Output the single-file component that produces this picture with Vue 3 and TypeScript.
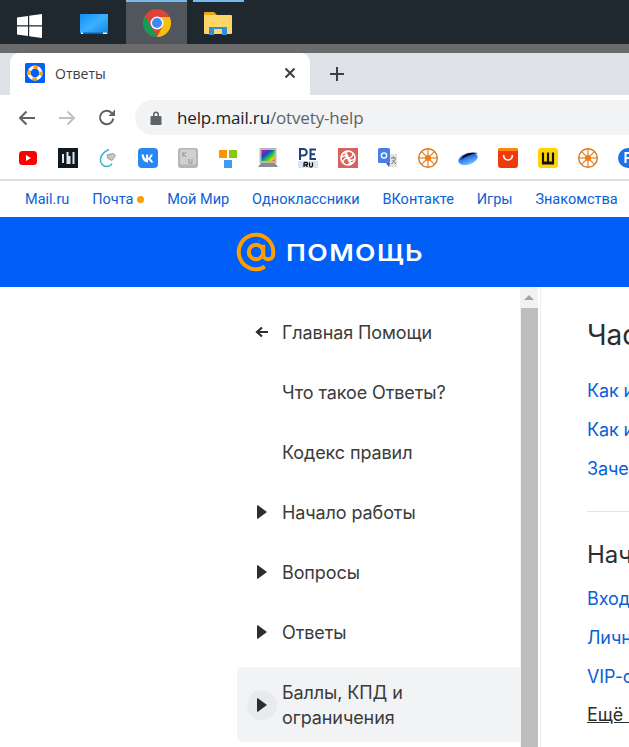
<script setup lang="ts">
const navLinks = ['Mail.ru', 'Почта', 'Мой Мир', 'Одноклассники', 'ВКонтакте', 'Игры', 'Знакомства']
const menu = [
  { label: 'Главная Помощи', icon: 'back' },
  { label: 'Что такое Ответы?', icon: '' },
  { label: 'Кодекс правил', icon: '' },
  { label: 'Начало работы', icon: 'play' },
  { label: 'Вопросы', icon: 'play' },
  { label: 'Ответы', icon: 'play' },
]
const spokes = [0, 45, 90, 135, 180, 225, 270, 315]
</script>

<template>
  <div class="page">
    <div class="taskbar">
      <div class="task task-start">
        <svg width="26" height="26" viewBox="0 0 26 26"><path fill="#fff" d="M0 4.500 11 3v9.300H0zM12.200 2.800 25 1v11.300H12.200zM0 13.500h11v9.400L0 21.400zM12.200 13.500H25V25l-12.800-1.800z"/></svg>
      </div>
      <div class="task task-desktop">
        <svg width="28" height="20" viewBox="0 0 28 20"><defs><linearGradient id="dk" x1="0" y1="0" x2="1" y2="1"><stop offset="0" stop-color="#0f8ff0"/><stop offset=".5" stop-color="#3db0ff"/><stop offset="1" stop-color="#0a86ea"/></linearGradient></defs><rect width="28" height="20" fill="url(#dk)"/><rect y="18.500" width="28" height="1.500" fill="#0b63b5"/><rect x="1" y="18.500" width="2" height="1.500" fill="#dff"/><rect x="23" y="18.500" width="4" height="1.500" fill="#dff"/></svg>
      </div>
      <div class="task task-chrome">
        <svg width="28" height="28" viewBox="0 0 28 28">
          <circle cx="14" cy="14" r="14" fill="#db4437"/>
          <path fill="#0f9d58" d="M14 28A14 14 0 0 1 1.900 7L8.600 18.500l6 9.500z"/>
          <path fill="#f4c20d" d="M14 28c7.700 0 14-6.300 14-14 0-2.200-.5-4.200-1.400-6H14l5 10.500z"/>
          <circle cx="14" cy="14" r="6.500" fill="#fff"/>
          <circle cx="14" cy="14" r="5" fill="#4285f4"/>
        </svg>
      </div>
      <div class="task task-files">
        <svg width="28" height="24" viewBox="0 0 28 24">
          <path fill="#e6a817" d="M0 2a1 1 0 0 1 1-1h9l3 3v3H0z"/>
          <rect y="4" width="28" height="19" rx="1" fill="#fcd667"/>
          <path fill="#2f8fd8" d="M5 16h18v8h-5v-4h-8v4H5z"/>
          <rect x="10" y="18" width="8" height="4" fill="#fcd667"/>
        </svg>
      </div>
    </div>
    <div class="window-edge"></div>

    <div class="tabstrip">
      <div class="tab">
        <svg class="favicon" width="20" height="20" viewBox="0 0 20 20">
          <rect width="20" height="20" rx="1.500" fill="#005ff9"/>
          <circle cx="10" cy="10" r="6" fill="none" stroke="#fff" stroke-width="3.200"/>
          <circle cx="10" cy="10" r="6" fill="none" stroke="#ff9e00" stroke-width="3.200" stroke-dasharray="4.700 4.700" stroke-dashoffset="2.300"/>
        </svg>
        <span class="tab-title">Ответы</span>
        <svg width="12" height="12" viewBox="0 0 12 12"><path d="M1.500 1.500l9 9m0-9l-9 9" stroke="#3c4043" stroke-width="2" fill="none"/></svg>
      </div>
      <svg class="newtab" width="16" height="16" viewBox="0 0 16 16"><path d="M8 1v14M1 8h14" stroke="#3c4043" stroke-width="2"/></svg>
    </div>

    <div class="toolbar">
      <svg class="tool" width="20" height="20" viewBox="0 0 20 20"><path d="M18 10H3m6.500-6.500L3 10l6.500 6.500" fill="none" stroke="#5f6368" stroke-width="2"/></svg>
      <svg class="tool" width="20" height="20" viewBox="0 0 20 20"><path d="M2 10h15m-6.500-6.500L17 10l-6.500 6.500" fill="none" stroke="#bdc1c6" stroke-width="2"/></svg>
      <svg class="tool" width="20" height="20" viewBox="0 0 20 20"><path d="M16.300 10.500A6.700 6.700 0 1 1 14.600 5" fill="none" stroke="#5f6368" stroke-width="2"/><path d="M11.500 8H18V1.500z" fill="#5f6368"/></svg>
      <div class="omnibox">
        <svg width="12" height="16" viewBox="0 0 12 16"><path fill="#5f6368" d="M1.500 6H3V4.500a3 3 0 0 1 6 0V6h1.500a1 1 0 0 1 1 1v7a1 1 0 0 1-1 1h-9a1 1 0 0 1-1-1V7a1 1 0 0 1 1-1zM4.500 6h3V4.500a1.500 1.500 0 0 0-3 0z"/></svg>
        <span class="url"><span class="url-host">help.mail.ru</span>/otvety-help</span>
      </div>
    </div>

    <div class="bookmarks">
      <svg width="20" height="20" viewBox="0 0 20 20"><rect x="1" y="3" width="18" height="14" rx="3.500" fill="#f00"/><path d="M8 7l5 3-5 3z" fill="#fff"/></svg>
      <svg width="20" height="20" viewBox="0 0 20 20"><rect width="20" height="20" fill="#111a20"/><path d="M5 6v9M9.500 4v12M11.500 8v8M15.500 4v12" stroke="#dfe6ea" stroke-width="2"/></svg>
      <svg width="20" height="20" viewBox="0 0 20 20"><path d="M11 1.500C6.500 3.500 3 7 2.500 11c-.4 4 2.500 7.500 6 7.500 2.500 0 4.500-1.200 5.500-3" fill="none" stroke="#36b4cc" stroke-width="1.500"/><path d="M9 7l6-1.500 2.500 2-3.500 5-4-2z" fill="#c9c9c9" stroke="#777" stroke-width=".7"/></svg>
      <svg width="20" height="20" viewBox="0 0 20 20"><rect width="20" height="20" rx="4" fill="#2787f5"/><path d="M3.500 6.500h2.300c.3 2.500 1.200 4 2.200 4.300V6.500h2.100v3.400c1-.2 2-1.600 2.500-3.400h2.100c-.4 2-1.500 3.500-2.500 4.200 1 .6 2.300 1.800 3 3.800h-2.300c-.6-1.500-1.600-2.600-2.800-2.800v2.800H10c-3.600 0-6-2.800-6.500-8z" fill="#fff"/></svg>
      <svg width="20" height="20" viewBox="0 0 20 20"><rect width="20" height="20" rx="3" fill="#b5b5b5"/><rect x="2" y="1.500" width="16" height="15" rx="2" fill="#d0d0d0"/><path d="M5 4v5M8 4L5.500 6.500 8 9M11 11v4h3v-4" stroke="#8f8f8f" fill="none"/></svg>
      <svg width="20" height="20" viewBox="0 0 20 20"><rect x="1" y="2" width="8" height="8" fill="#ff9400"/><rect x="11" y="2" width="8" height="8" fill="#8bc715"/><rect x="6" y="12" width="8" height="8" fill="#3f9bf2"/></svg>
      <svg width="20" height="20" viewBox="0 0 20 20"><defs><linearGradient id="mon" x1="0" y1="0" x2="1" y2="1"><stop offset="0" stop-color="#e0129a"/><stop offset=".35" stop-color="#1b3fe0"/><stop offset=".6" stop-color="#18c93a"/><stop offset=".85" stop-color="#f5d00d"/><stop offset="1" stop-color="#f02a1a"/></linearGradient></defs><rect x="1.500" y="0" width="17" height="15" fill="#b8b8b8"/><rect x="3.500" y="2" width="13" height="11" fill="url(#mon)"/><path d="M0 19l3-4h14l3 4z" fill="#8c8c8c"/></svg>
      <svg width="20" height="20" viewBox="0 0 20 20"><rect y="13" width="20" height="7" fill="#dbe6f5"/><path d="M2 12V1h3.500a3 3 0 0 1 0 6.500H2M11.500 1.500H18M11.500 6.300H17M11.500 11H18M12.500 1v10.500" fill="none" stroke="#1f3f7a" stroke-width="2"/><path d="M6 14.500V19M6 14.500h2.300a1.200 1.200 0 0 1 0 2.500H6M8.300 17l1 2M11.500 14.500v3a1.500 1.500 0 0 0 3 0v-3" fill="none" stroke="#111" stroke-width="1.300"/></svg>
      <svg width="20" height="20" viewBox="0 0 20 20"><rect width="20" height="20" fill="#d9625e"/><circle cx="10" cy="10" r="7" fill="none" stroke="#fff" stroke-width="1.600"/><path d="M10 3c-3 2-3 5 0 7s3 5 0 7M3 10c2-3 5-3 7 0s5 3 7 0M5 5c3 0 5 2 5 5s2 5 5 5M15 5c0 3-2 5-5 5s-5 2-5 5" fill="none" stroke="#fff" stroke-width="1.300"/></svg>
      <svg width="20" height="20" viewBox="0 0 20 20"><path d="M10 6h9v13h-8z" fill="#e3e3e3"/><rect x="0" y="0" width="12" height="15" rx="1.500" fill="#4a7fe6"/><path d="M8 15l3 4 1-4z" fill="#3562c2"/><circle cx="6" cy="7.500" r="2.600" fill="none" stroke="#fff" stroke-width="1.400"/><path d="M13 10h5m-2.500-1.500v1.500m-2 6l4-5m-3 1l3.500 4" stroke="#777" fill="none"/></svg>
      <svg width="20" height="20" viewBox="0 0 20 20"><circle cx="10" cy="10" r="9.300" fill="#fff" stroke="#d9791d" stroke-width="1.400"/><g stroke="#e08a32" stroke-width="1.300"><line v-for="a in spokes" :key="a" x1="10" y1="10" x2="10" y2="1" :transform="`rotate(${a} 10 10)`"/></g><circle cx="10" cy="10" r="3" fill="#f47b10"/></svg>
      <svg width="20" height="20" viewBox="0 0 20 20"><defs><linearGradient id="ufo" x1="0" y1="0" x2="0" y2="1"><stop offset="0" stop-color="#0d47d9"/><stop offset="1" stop-color="#6cc2ff"/></linearGradient></defs><ellipse cx="10" cy="11" rx="10" ry="5.500" transform="rotate(-18 10 11)" fill="url(#ufo)"/><path d="M3 12C5 6 11 3 20 5c-4 1-11 2-17 7z" fill="#07121f"/></svg>
      <svg width="20" height="20" viewBox="0 0 20 20"><rect width="20" height="20" rx="3" fill="#ee3a0d"/><rect width="20" height="3" rx="1.500" fill="#fb8a12"/><path d="M5.500 7c.3 3.500 2.200 5 4.500 5s4.200-1.500 4.500-5" fill="none" stroke="#fff" stroke-width="1.600"/></svg>
      <svg width="20" height="20" viewBox="0 0 20 20"><rect width="20" height="20" rx="3" fill="#ffd400"/><path d="M5 4.500v10h10v-10M10 4.500v10M4 15.500h12" fill="none" stroke="#111" stroke-width="2.200"/></svg>
      <svg width="20" height="20" viewBox="0 0 20 20"><circle cx="10" cy="10" r="9.300" fill="#fff" stroke="#d9791d" stroke-width="1.400"/><g stroke="#e08a32" stroke-width="1.300"><line v-for="a in spokes" :key="a" x1="10" y1="10" x2="10" y2="1" :transform="`rotate(${a} 10 10)`"/></g><circle cx="10" cy="10" r="3" fill="#f47b10"/></svg>
      <svg width="20" height="20" viewBox="0 0 20 20"><circle cx="10" cy="10" r="10" fill="#1a73e8"/><path d="M7.500 15V5H13M7.500 10H12" fill="none" stroke="#fff" stroke-width="2"/></svg>
    </div>

    <nav class="portal">
      <a v-for="link in navLinks" :key="link" class="portal-link">{{ link }}<i v-if="link === 'Почта'" class="dot"></i></a>
    </nav>

    <header class="hero">
      <svg width="40" height="40" viewBox="2 2 36 36"><path d="M26.500 20a6.500 6.500 0 1 1-13 0 6.500 6.500 0 0 1 13 0zM26.500 13.500V22a4.500 4.500 0 0 0 9 0v-2a15.500 15.500 0 1 0-7.500 13.300" fill="none" stroke="#ff9e00" stroke-width="3.600"/></svg>
      <span class="hero-title">ПОМОЩЬ</span>
    </header>

    <main class="body">
      <aside class="side">
        <div v-for="item in menu" :key="item.label" class="side-row">
          <span class="side-icon">
            <svg v-if="item.icon === 'back'" width="14" height="12" viewBox="0 0 14 12"><path d="M13 6H3m4-4.500L2 6l5 4.500" fill="none" stroke="#2c2d2e" stroke-width="2.200"/></svg>
            <svg v-else-if="item.icon === 'play'" class="play" width="10" height="14" viewBox="0 0 10 14"><path d="M0 .8v12.400a.6.600 0 0 0 .9.500L10 7 .9.300A.6.600 0 0 0 0 .8z" fill="#2c2d2e"/></svg>
          </span>
          <span>{{ item.label }}</span>
        </div>
        <div class="side-row side-active">
          <span class="side-icon side-icon-round">
            <svg width="10" height="14" viewBox="0 0 10 14"><path d="M0 .8v12.400a.6.600 0 0 0 .9.500L10 7 .9.300A.6.600 0 0 0 0 .8z" fill="#2c2d2e"/></svg>
          </span>
          <span class="side-label">Баллы, КПД и<br>ограничения</span>
        </div>
      </aside>
      <div class="scroll">
        <div class="scroll-btn"><i class="scroll-arrow"></i></div>
        <div class="scroll-thumb"></div>
      </div>
      <section class="content">
        <h2 class="title">Часто задаваемые</h2>
        <a class="link">Как изменить</a>
        <a class="link">Как использовать</a>
        <a class="link">Зачем нужны</a>
        <hr class="rule">
        <h3 class="subtitle">Начало работы</h3>
        <a class="link">Вход в Ответы</a>
        <a class="link">Личный кабинет</a>
        <a class="link">VIP-статус</a>
        <a class="more">Ещё вопросы</a>
      </section>
    </main>
  </div>
</template>

<style>
html, body { margin: 0; background: #fff; overflow: hidden; }
</style>

<style scoped>
.page {
  width: 629px;
  height: 747px;
  overflow: hidden;
  display: flex;
  flex-direction: column;
  font-family: Roboto, "Liberation Sans", sans-serif;
  background: #fff;
}
.taskbar {
  flex: none;
  height: 44px;
  display: flex;
  background: #1f282e;
}
.task {
  height: 44px;
  display: flex;
  align-items: center;
  justify-content: center;
  box-sizing: border-box;
}
.task-start { width: 59px; padding-top: 8px; }
.task-desktop { width: 67px; padding: 4px 0 0 2px; }
.task-chrome { width: 61px; background: #50565c; border-top: 2px solid #76b9ed; }
.task-files { width: 51px; margin-left: 6px; padding-right: 2px; border-top: 2px solid #76b9ed; }
.window-edge { flex: none; height: 9px; background: #6b6b6b; }
.tabstrip {
  flex: none;
  height: 42px;
  background: #dee1e6;
  display: flex;
  align-items: center;
  padding-left: 10px;
}
.tab {
  width: 300px;
  height: 42px;
  box-sizing: border-box;
  background: #fff;
  border-radius: 9px 9px 0 0;
  display: flex;
  align-items: center;
  padding: 0 14px 2px 15px;
  gap: 10px;
}
.tab-title { flex: 1; font-size: 14px; color: #3c4043; font-family: "Open Sans", sans-serif; }
.newtab { margin-left: 19px; }
.toolbar {
  flex: none;
  height: 45px;
  box-sizing: border-box;
  padding: 5px 0 5px 17px;
  display: flex;
  align-items: center;
  gap: 20px;
}
.tool { flex: none; }
.omnibox {
  flex: 1;
  margin-left: -2px;
  height: 35px;
  background: #f1f3f4;
  border-radius: 18px 0 0 18px;
  display: flex;
  align-items: center;
  gap: 15px;
  padding-left: 15px;
}
.url { font-size: 17px; color: #5f6368; font-family: "Open Sans", sans-serif; letter-spacing: -0.15px; white-space: nowrap; }
.url-host { color: #202124; }
.bookmarks {
  flex: none;
  height: 41px;
  box-sizing: border-box;
  display: flex;
  align-items: flex-start;
  padding: 8px 0 0 18px;
  gap: 20px;
  border-bottom: 2px solid #dedede;
  overflow: hidden;
}
.bookmarks svg { flex: none; }
.portal {
  flex: none;
  height: 36px;
  display: flex;
  align-items: center;
  padding-left: 25px;
  gap: 22.800px;
  font-size: 14.500px;
  color: #0a5fd6;
  white-space: nowrap;
}
.portal-link { display: inline-flex; align-items: center; }
.dot { width: 7px; height: 7px; border-radius: 50%; background: #ff9e00; margin-left: 4px; }
.hero {
  flex: none;
  height: 70px;
  background: #005ff9;
  display: flex;
  align-items: center;
  justify-content: center;
  gap: 10px;
  padding-left: 15px;
}
.hero-title {
  color: #fff;
  font-family: Inter, sans-serif;
  font-weight: 600;
  font-size: 23.500px;
  letter-spacing: 1.300px;
  transform: scaleX(1.13);
  transform-origin: left center;
}
.body { flex: 1; display: flex; min-height: 0; }
.side {
  flex: none;
  width: 283px;
  margin-left: 237px;
  padding-top: 15px;
  display: flex;
  flex-direction: column;
  font-size: 18px;
  color: #3a3b3c;
  font-family: Inter, Roboto, sans-serif;
  letter-spacing: -0.1px;
}
.side-row {
  height: 60px;
  display: flex;
  align-items: center;
  flex: none;
}
.side-icon {
  flex: none;
  width: 45px;
  padding-left: 18px;
  box-sizing: border-box;
  display: flex;
  align-items: center;
}
.play { margin-left: 2px; }
.side-active {
  height: 75px;
  margin-top: 5px;
  background: #f2f3f5;
  border-radius: 6px 0 0 6px;
  line-height: 25px;
}
.side-label { padding-top: 1px; }
.side-icon-round {
  width: 30px;
  height: 30px;
  margin: 0 5px 0 10px;
  padding-left: 0;
  justify-content: center;
  border-radius: 50%;
  background: #e9eaec;
}
.scroll {
  flex: none;
  width: 18px;
  background: #f1f1f1;
  display: flex;
  flex-direction: column;
}
.scroll-btn { height: 21px; display: flex; align-items: center; justify-content: center; }
.scroll-arrow {
  width: 0;
  height: 0;
  border-left: 5px solid transparent;
  border-right: 5px solid transparent;
  border-bottom: 5px solid #a3a3a3;
}
.scroll-thumb { flex: 1; margin-left: 1px; background: #bdbdbd; }
.content {
  flex: 1;
  min-width: 0;
  padding: 30px 0 0 46px;
  margin-left: 2px;
  border-left: 1px solid #eceef0;
  display: flex;
  flex-direction: column;
  white-space: nowrap;
  overflow: hidden;
}
.title { margin: 0 0 18px; font-size: 28px; line-height: 36px; font-weight: 400; color: #2c2d2e; font-family: Inter, sans-serif; }
.subtitle { margin: 0 0 8px; font-size: 24px; line-height: 32px; font-weight: 400; color: #2c2d2e; font-family: Inter, sans-serif; }
.link { height: 39px; line-height: 39px; flex: none; font-size: 18px; color: #0a5fd6; font-family: Inter, sans-serif; letter-spacing: -0.1px; }
.rule { width: 100%; margin: 23px 0 27px; border: 0; border-top: 1px solid #e3e5e8; flex: none; }
.more { margin-top: 7px; font-size: 18px; line-height: 24px; color: #2c2d2e; font-family: Inter, sans-serif; text-decoration: underline; }
</style>
